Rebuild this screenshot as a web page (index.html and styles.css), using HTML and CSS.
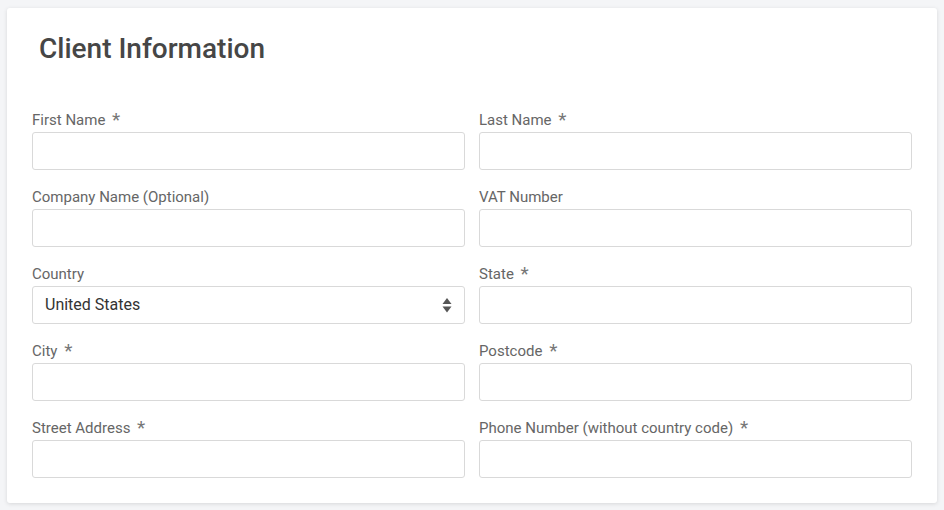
FILE: index.html
```html
<!DOCTYPE html>
<html lang="en">
<head>
  <meta charset="UTF-8">
  <meta name="viewport" content="width=device-width, initial-scale=1.0">
  <title>Client Information</title>
  <link rel="stylesheet" href="styles.css">
</head>
<body>
  <div class="card">
    <h2 class="card-title">Client Information</h2>

    <form class="client-form">
      <div class="field">
        <label>First Name <span class="req">*</span></label>
        <input type="text">
      </div>
      <div class="field">
        <label>Last Name <span class="req">*</span></label>
        <input type="text">
      </div>

      <div class="field">
        <label>Company Name (Optional)</label>
        <input type="text">
      </div>
      <div class="field">
        <label>VAT Number</label>
        <input type="text">
      </div>

      <div class="field">
        <label>Country</label>
        <div class="select-wrap">
          <select>
            <option>United States</option>
            <option>Canada</option>
            <option>United Kingdom</option>
          </select>
          <svg class="select-arrow" width="10" height="15" viewBox="0 0 10 15">
            <path d="M5 0 L9.5 6 L0.5 6 Z" fill="#555"/>
            <path d="M0.5 8.5 L9.5 8.5 L5 14.5 Z" fill="#555"/>
          </svg>
        </div>
      </div>
      <div class="field">
        <label>State <span class="req">*</span></label>
        <input type="text">
      </div>

      <div class="field">
        <label>City <span class="req">*</span></label>
        <input type="text">
      </div>
      <div class="field">
        <label>Postcode <span class="req">*</span></label>
        <input type="text">
      </div>

      <div class="field">
        <label>Street Address <span class="req">*</span></label>
        <input type="text">
      </div>
      <div class="field">
        <label>Phone Number (without country code) <span class="req">*</span></label>
        <input type="text">
      </div>
    </form>
  </div>
</body>
</html>
```

FILE: styles.css
```css
body {
  font-family: Roboto, 'Liberation Sans', sans-serif;
  background-color: #f4f5f7;
  color: #333;
  margin: 0;
  padding: 8px 7px 7px;
}

.card {
  background-color: #fff;
  border-radius: 3px;
  box-shadow: 0 1px 4px rgba(0,0,0,0.12);
  padding: 24px 25px 25px;
}

.card-title {
  font-size: 28px;
  line-height: 34px;
  font-weight: 500;
  color: #464646;
  margin: 0 0 43px;
  padding-left: 7px;
}

.client-form {
  display: grid;
  grid-template-columns: 1fr 1fr;
  column-gap: 14px;
  row-gap: 16px;
}

.field label {
  display: block;
  font-size: 15px;
  line-height: 20px;
  color: #666;
  padding-top: 1px;
  margin-bottom: 2px;
}

.req {
  font-size: 19px;
  color: #777;
  margin-left: 3px;
  vertical-align: -1px;
}

.field input,
.field select {
  display: block;
  width: 100%;
  height: 38px;
  box-sizing: border-box;
  border: 1px solid #d9d9d9;
  border-radius: 3px;
  background: #fff;
  font-family: inherit;
  font-size: 16px;
  color: #333;
  padding: 0 12px;
  margin: 0;
  outline: none;
}

.select-wrap {
  position: relative;
}

.field select {
  -webkit-appearance: none;
  appearance: none;
  padding-right: 30px;
  padding-bottom: 2px;
}

.select-arrow {
  position: absolute;
  right: 13px;
  top: 12px;
  pointer-events: none;
}
```
